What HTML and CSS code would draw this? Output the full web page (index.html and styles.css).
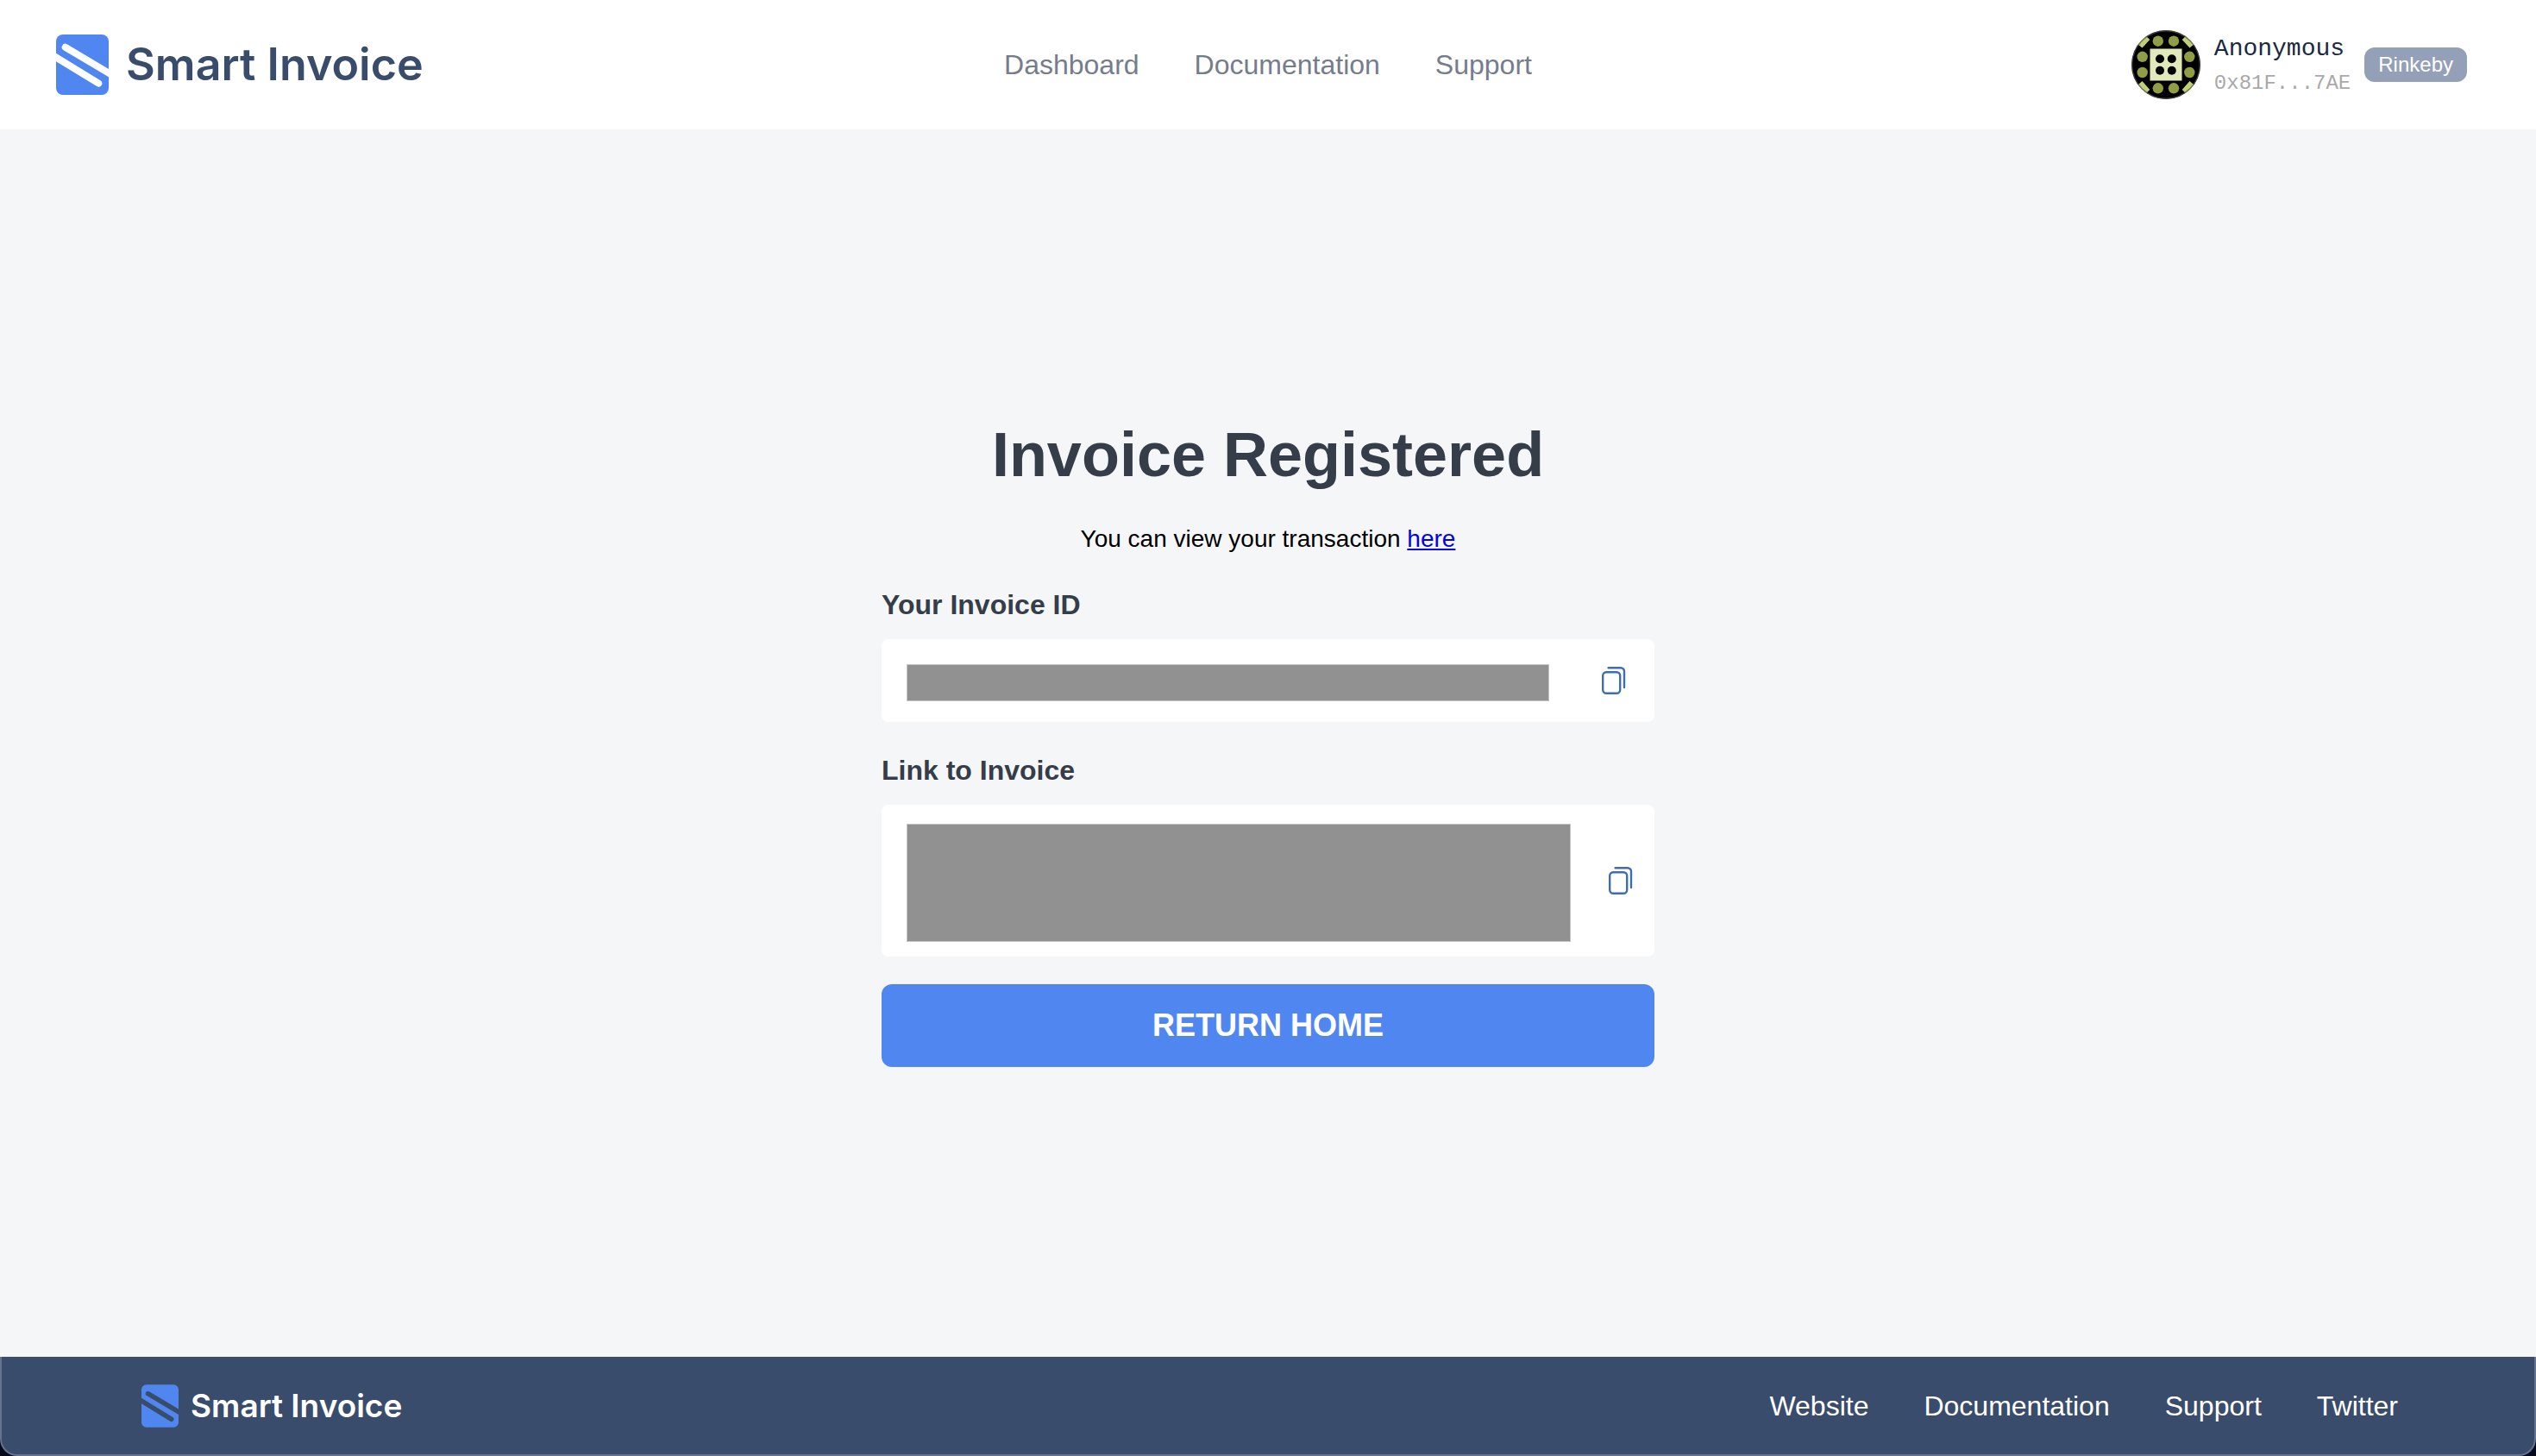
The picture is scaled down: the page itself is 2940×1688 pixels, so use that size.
FILE: index.html
```html
<!DOCTYPE html>
<html lang="en">
<head>
<meta charset="utf-8">
<meta name="viewport" content="width=device-width, initial-scale=1">
<title>Smart Invoice</title>
<link rel="stylesheet" href="styles.css">
</head>
<body>
<header class="header">
  <a class="brand" href="#">
    <svg class="brand-mark" viewBox="0 0 61 70" aria-hidden="true">
      <rect width="61" height="70" rx="8"/>
      <path d="M10.7 14.7 L66 47.6 M-6 22.8 L49.3 56.7"/>
    </svg>
    <span>Smart Invoice</span>
  </a>
  <nav class="links">
    <a href="#">Dashboard</a>
    <a href="#">Documentation</a>
    <a href="#">Support</a>
  </nav>
  <div class="account">
    <svg class="avatar" viewBox="0 0 80 80" aria-hidden="true">
      <defs>
        <clipPath id="round"><circle cx="40" cy="40" r="40"/></clipPath>
      </defs>
      <g clip-path="url(#round)">
        <rect width="80" height="80" fill="#000"/>
        <g fill="#c1d077">
          <path d="M21.3 11 L12.5 20.5 L0 10 L10 0Z"/>
          <path d="M58.7 11 L67.5 20.5 L80 10 L70 0Z"/>
          <path d="M21.3 69 L12.5 59 L0 70 L10 80Z"/>
          <path d="M58.7 69 L67.5 59 L80 70 L70 80Z"/>
        </g>
        <g fill="#909d45">
          <circle cx="30.8" cy="12.7" r="6.2"/><circle cx="49" cy="12.7" r="6.2"/>
          <circle cx="12.7" cy="30.8" r="6.2"/><circle cx="12.7" cy="49" r="6.2"/>
          <circle cx="67.3" cy="30.8" r="6.2"/><circle cx="67.3" cy="49" r="6.2"/>
          <circle cx="30.8" cy="67.3" r="6.2"/><circle cx="49" cy="67.3" r="6.2"/>
        </g>
        <rect x="21.5" y="21.5" width="37" height="37" fill="#e1e8ba"/>
        <g fill="#000">
          <circle cx="33" cy="33.2" r="5"/><circle cx="46.8" cy="33.2" r="5"/>
          <circle cx="33" cy="46.8" r="5"/><circle cx="46.8" cy="46.8" r="5"/>
        </g>
        <circle cx="40" cy="40" r="39.3" fill="none" stroke="#555" stroke-opacity=".7" stroke-width="1.5"/>
      </g>
    </svg>
    <div class="identity">
      <span class="name">Anonymous</span>
      <span class="address">0x81F...7AE</span>
    </div>
    <span class="network">Rinkeby</span>
  </div>
</header>

<main class="main">
  <section class="card">
    <h1>Invoice Registered</h1>
    <p class="note">You can view your transaction <a href="#">here</a></p>

    <h2>Your Invoice ID</h2>
    <div class="field field-id">
      <div class="redacted"></div>
      <button class="copy" type="button" aria-label="Copy invoice ID">
        <svg viewBox="0 0 28 32" aria-hidden="true"><rect x="1.2" y="6.2" width="20" height="24.6" rx="4"/><path d="M7.6 1.2 H22 a4 4 0 0 1 4 4 V24"/></svg>
      </button>
    </div>

    <h2>Link to Invoice</h2>
    <div class="field field-link">
      <div class="redacted"></div>
      <button class="copy" type="button" aria-label="Copy link to invoice">
        <svg viewBox="0 0 28 32" aria-hidden="true"><rect x="1.2" y="6.2" width="20" height="24.6" rx="4"/><path d="M7.6 1.2 H22 a4 4 0 0 1 4 4 V24"/></svg>
      </button>
    </div>

    <button class="home" type="button">RETURN HOME</button>
  </section>
</main>

<footer class="footer">
  <a class="brand brand-small" href="#">
    <svg class="brand-mark" viewBox="0 0 61 70" aria-hidden="true">
      <rect width="61" height="70" rx="8"/>
      <path d="M10.7 14.7 L66 47.6 M-6 22.8 L49.3 56.7"/>
    </svg>
    <span>Smart Invoice</span>
  </a>
  <nav class="links">
    <a href="#">Website</a>
    <a href="#">Documentation</a>
    <a href="#">Support</a>
    <a href="#">Twitter</a>
  </nav>
</footer>
</body>
</html>
```
FILE: styles.css
```css
* {
  box-sizing: border-box;
}

html {
  background: #050a1c;
}

body {
  margin: 0;
  min-height: 100vh;
  display: flex;
  flex-direction: column;
  font-family: "Liberation Sans", Arial, sans-serif;
}

h1, h2, p {
  margin: 0;
}

.header {
  display: grid;
  grid-template-columns: 1fr auto 1fr;
  align-items: center;
  height: 150px;
  padding: 0 65px;
  background: #fff;
  color: #757d8b;
}

.brand {
  display: flex;
  align-items: center;
  gap: 20px;
  color: #3a4c6b;
  font: 600 52px/60px Inter, sans-serif;
  text-decoration: none;
}

.brand-mark {
  width: 61px;
  height: 70px;
  fill: #5086f0;
  stroke-width: 8;
  stroke-linecap: round;
}

.brand-mark path {
  stroke: #fff;
}

.links {
  display: flex;
  gap: 64px;
  font-size: 32px;
  line-height: 40px;
}

.links a {
  color: inherit;
  text-decoration: none;
}

.account {
  display: flex;
  align-items: center;
  justify-content: flex-end;
  gap: 16px;
  padding-right: 15px;
}

.avatar {
  width: 80px;
  height: 80px;
}

.identity {
  display: flex;
  flex-direction: column;
  padding-top: 4px;
  font-family: "Liberation Mono", "Courier New", monospace;
  line-height: 40px;
}

.name {
  color: #192a3e;
  font-size: 28px;
}

.address {
  color: #a9a9a9;
  font-size: 24px;
}

.network {
  padding: 0 16px;
  border-radius: 12px;
  background: #94a0b7;
  color: #fff;
  font-size: 24px;
  line-height: 40px;
}

.main {
  flex: 1;
  display: flex;
  align-items: center;
  justify-content: center;
  padding-bottom: 2px;
  background: #f4f6f8;
}

.card {
  display: flex;
  flex-direction: column;
  width: 100%;
  max-width: 896px;
  color: #353d49;
}

h1 {
  font-size: 72px;
  line-height: 84px;
  text-align: center;
}

.note {
  margin: 40px 0;
  color: #000;
  font-size: 28px;
  line-height: 32px;
  text-align: center;
}

.note a {
  color: #00e;
}

h2 {
  margin-bottom: 20px;
  font-size: 32px;
  line-height: 40px;
}

.field {
  display: flex;
  align-items: center;
  border-radius: 8px;
  background: #fff;
}

.field-id {
  height: 96px;
  margin-bottom: 36px;
  padding: 0 33px 0 29px;
  gap: 61px;
}

.field-link {
  height: 176px;
  margin-bottom: 32px;
  padding: 0 25px 0 29px;
  gap: 44px;
}

.redacted {
  flex: 1;
  height: 43px;
  margin-top: 6px;
  border: 1px solid #c4c4c4;
  background: #919191;
}

.field-link .redacted {
  height: 137px;
}

.copy {
  width: 28px;
  height: 32px;
  padding: 0;
  border: 0;
  background: none;
}

.copy svg {
  display: block;
  fill: none;
  stroke: #3f6db3;
  stroke-width: 2.4;
  stroke-linecap: round;
}

.home {
  height: 96px;
  border: 0;
  border-radius: 12px;
  background: #5086f0;
  color: #fff;
  font: bold 36px/40px "Liberation Sans", Arial, sans-serif;
}

.footer {
  display: flex;
  align-items: center;
  justify-content: space-between;
  height: 115px;
  padding: 0 158px 0 162px;
  border: 2px solid #66738c;
  border-top: 0;
  border-radius: 0 0 20px 20px;
  background: #3a4c6b;
  color: #fff;
}

.brand-small {
  gap: 14px;
  color: #fff;
  font-size: 37px;
  line-height: 40px;
}

.brand-small .brand-mark {
  width: 43px;
  height: 50px;
}

.brand-small .brand-mark path {
  stroke: #3a4c6b;
}
```
